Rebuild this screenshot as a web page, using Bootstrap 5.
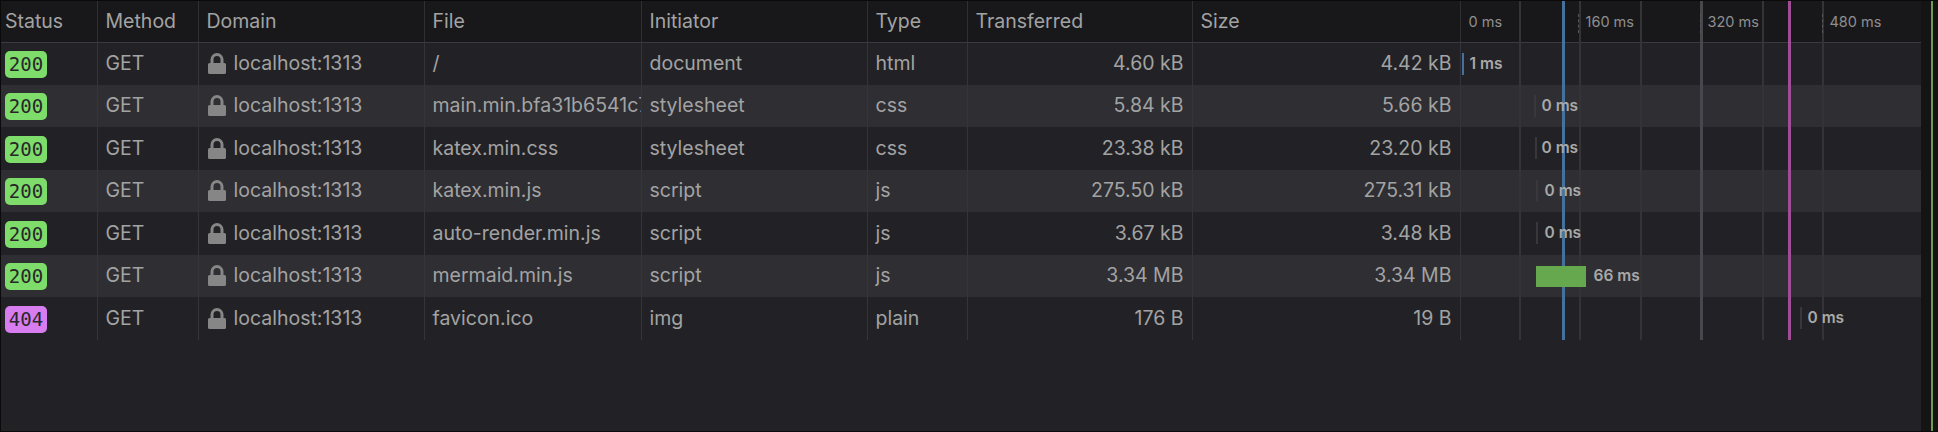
<!DOCTYPE html>
<html lang="en">
<head>
<meta charset="utf-8">
<title>Network</title>
<link href="https://cdn.jsdelivr.net/npm/bootstrap@5.3.0/dist/css/bootstrap.min.css" rel="stylesheet">
<style>
html,body{height:100%;margin:0;background:#222226;}
body{font-family:Inter,"Liberation Sans",sans-serif;overflow:hidden;}
.shell{height:432px;border:1px solid #0a0a0b;border-right:0;background:#222226;}
.main-pane{width:1920px;flex:none;position:relative;}
.rail{flex:1 1 auto;background:#141415;position:relative;}
.rail::after{content:"";position:absolute;top:0;bottom:0;left:10px;width:2px;background:#6f9a50;}
.net-table{table-layout:fixed;width:1920px;margin:0;color:#a3a3a3;font-size:19.5px;--bs-table-bg:transparent;--bs-table-color:#a3a3a3;}
.net-table th,.net-table td{border:0;border-right:1px solid #34343a;padding:0 8px 0 8px;white-space:nowrap;overflow:hidden;vertical-align:middle;font-weight:400;box-shadow:none;background:transparent;color:#a3a3a3;}
.net-table th{height:41px;background:#18181b;border-bottom:1px solid #3a3a40;border-right-color:#2f2f34;}
.net-table td{height:42.5px;}
.net-table th:first-child,.net-table td:first-child{padding-left:4px;padding-right:0;}
.net-table tbody tr:nth-child(even) td{background:#2e2e33;}
.net-table .flush-end{padding-right:0;}
.net-table .time-col{border-right:0;overflow:visible;padding:0;position:relative;}
.net-table th.time-col{font-size:14.5px;color:#8f8f8f;}
.code-pill{display:inline-block;width:42px;height:27px;line-height:27px;text-align:center;border-radius:5px;font-family:"DejaVu Sans Mono",monospace;font-size:19px;color:#27272a;vertical-align:middle;padding:0;}
.code-ok{background:#7edc6b;}
.code-miss{background:#d87df0;}
.lock-ico{width:18px;height:21px;margin-left:1px;margin-right:8px;flex:none;fill:#868686;}
.tick-label{position:absolute;top:12px;line-height:17px;z-index:2;}
.tick-dot{position:absolute;top:13px;height:19px;width:0;border-left:1px dashed #55555b;z-index:2;}
.wf-mark{position:absolute;top:10px;height:22px;width:2px;background:#37373c;z-index:2;}
.wf-blue{background:#44729c;}
.wf-bar{position:absolute;top:11px;height:21px;background:#65a84e;z-index:2;}
.wf-time{position:absolute;top:11px;line-height:20px;font-size:15.5px;font-weight:600;color:#a8a8a8;z-index:2;}
.guide{position:absolute;top:0;height:339px;width:2px;background:#333338;z-index:1;pointer-events:none;}
.guide-strong{background:#47474d;width:3px;}
.guide-dom{background:#44729c;width:3px;}
.guide-load{background:#a04c96;width:3px;}
.g2{left:1518px;}.g3{left:1561px;}.g4{left:1578px;}.g5{left:1639px;}.g6{left:1699px;}.g7{left:1761px;}.g8{left:1787px;}.g9{left:1821px;}
.lb0{left:8px}.lb1{left:125px}.lb2{left:247px}.lb3{left:369px}
.d-a{left:117px}.d-b{left:239px}.d-c{left:361px}
.tx1{left:9px}.mk1{left:1px}
.mk2{left:73px}.tx2{left:81px}
.mk3{left:74px}.tx3{left:81px}
.mk4{left:75px}.tx4{left:84px}
.mk5{left:75px}.tx5{left:84px}
.bar6{left:75px;width:50px}.tx6{left:133px}
.mk7{left:339px}.tx7{left:347px}
</style>
</head>
<body>
<svg class="d-none"><symbol id="lock" viewBox="0 0 18 21"><path d="M2.500 10V6.500a6.500 6.500 0 0 1 13 0V10h1A1.500 1.500 0 0 1 18 11.500v8A1.500 1.500 0 0 1 16.500 21h-15A1.500 1.500 0 0 1 0 19.500v-8A1.500 1.500 0 0 1 1.500 10zm3 0h7V6.500a3.500 3.500 0 0 0-7 0z"/></symbol></svg>
<div class="shell d-flex">
  <div class="main-pane">
    <table class="table net-table">
      <colgroup>
        <col style="width:96px"><col style="width:101px"><col style="width:226px"><col style="width:217px"><col style="width:226px"><col style="width:100px"><col style="width:225px"><col style="width:268px"><col style="width:461px">
      </colgroup>
      <thead>
        <tr>
          <th>Status</th><th>Method</th><th>Domain</th><th>File</th><th>Initiator</th><th>Type</th><th>Transferred</th><th>Size</th>
          <th class="time-col">
            <span class="tick-label lb0">0 ms</span>
            <span class="tick-dot d-a"></span><span class="tick-label lb1">160 ms</span>
            <span class="tick-dot d-b"></span><span class="tick-label lb2">320 ms</span>
            <span class="tick-dot d-c"></span><span class="tick-label lb3">480 ms</span>
          </th>
        </tr>
      </thead>
      <tbody>
        <tr><td><span class="code-pill code-ok">200</span></td><td>GET</td><td><div class="d-flex align-items-center"><svg class="lock-ico"><use href="#lock"/></svg>localhost:1313</div></td><td class="flush-end">/</td><td>document</td><td>html</td><td class="text-end">4.60 kB</td><td class="text-end">4.42 kB</td><td class="time-col"><span class="wf-mark wf-blue mk1"></span><span class="wf-time tx1">1 ms</span></td></tr>
        <tr><td><span class="code-pill code-ok">200</span></td><td>GET</td><td><div class="d-flex align-items-center"><svg class="lock-ico"><use href="#lock"/></svg>localhost:1313</div></td><td class="flush-end">main.min.bfa31b6541c7e2f3.css</td><td>stylesheet</td><td>css</td><td class="text-end">5.84 kB</td><td class="text-end">5.66 kB</td><td class="time-col"><span class="wf-mark mk2"></span><span class="wf-time tx2">0 ms</span></td></tr>
        <tr><td><span class="code-pill code-ok">200</span></td><td>GET</td><td><div class="d-flex align-items-center"><svg class="lock-ico"><use href="#lock"/></svg>localhost:1313</div></td><td class="flush-end">katex.min.css</td><td>stylesheet</td><td>css</td><td class="text-end">23.38 kB</td><td class="text-end">23.20 kB</td><td class="time-col"><span class="wf-mark mk3"></span><span class="wf-time tx3">0 ms</span></td></tr>
        <tr><td><span class="code-pill code-ok">200</span></td><td>GET</td><td><div class="d-flex align-items-center"><svg class="lock-ico"><use href="#lock"/></svg>localhost:1313</div></td><td class="flush-end">katex.min.js</td><td>script</td><td>js</td><td class="text-end">275.50 kB</td><td class="text-end">275.31 kB</td><td class="time-col"><span class="wf-mark mk4"></span><span class="wf-time tx4">0 ms</span></td></tr>
        <tr><td><span class="code-pill code-ok">200</span></td><td>GET</td><td><div class="d-flex align-items-center"><svg class="lock-ico"><use href="#lock"/></svg>localhost:1313</div></td><td class="flush-end">auto-render.min.js</td><td>script</td><td>js</td><td class="text-end">3.67 kB</td><td class="text-end">3.48 kB</td><td class="time-col"><span class="wf-mark mk5"></span><span class="wf-time tx5">0 ms</span></td></tr>
        <tr><td><span class="code-pill code-ok">200</span></td><td>GET</td><td><div class="d-flex align-items-center"><svg class="lock-ico"><use href="#lock"/></svg>localhost:1313</div></td><td class="flush-end">mermaid.min.js</td><td>script</td><td>js</td><td class="text-end">3.34 MB</td><td class="text-end">3.34 MB</td><td class="time-col"><span class="wf-bar bar6"></span><span class="wf-time tx6">66 ms</span></td></tr>
        <tr><td><span class="code-pill code-miss">404</span></td><td>GET</td><td><div class="d-flex align-items-center"><svg class="lock-ico"><use href="#lock"/></svg>localhost:1313</div></td><td class="flush-end">favicon.ico</td><td>img</td><td>plain</td><td class="text-end">176 B</td><td class="text-end">19 B</td><td class="time-col"><span class="wf-mark mk7"></span><span class="wf-time tx7">0 ms</span></td></tr>
      </tbody>
    </table>
    <span class="guide g2"></span><span class="guide guide-dom g3"></span><span class="guide g4"></span><span class="guide g5"></span><span class="guide guide-strong g6"></span><span class="guide g7"></span><span class="guide guide-load g8"></span><span class="guide g9"></span>
  </div>
  <div class="rail"></div>
</div>
<script src="https://cdn.jsdelivr.net/npm/bootstrap@5.3.0/dist/js/bootstrap.bundle.min.js"></script>
</body>
</html>
